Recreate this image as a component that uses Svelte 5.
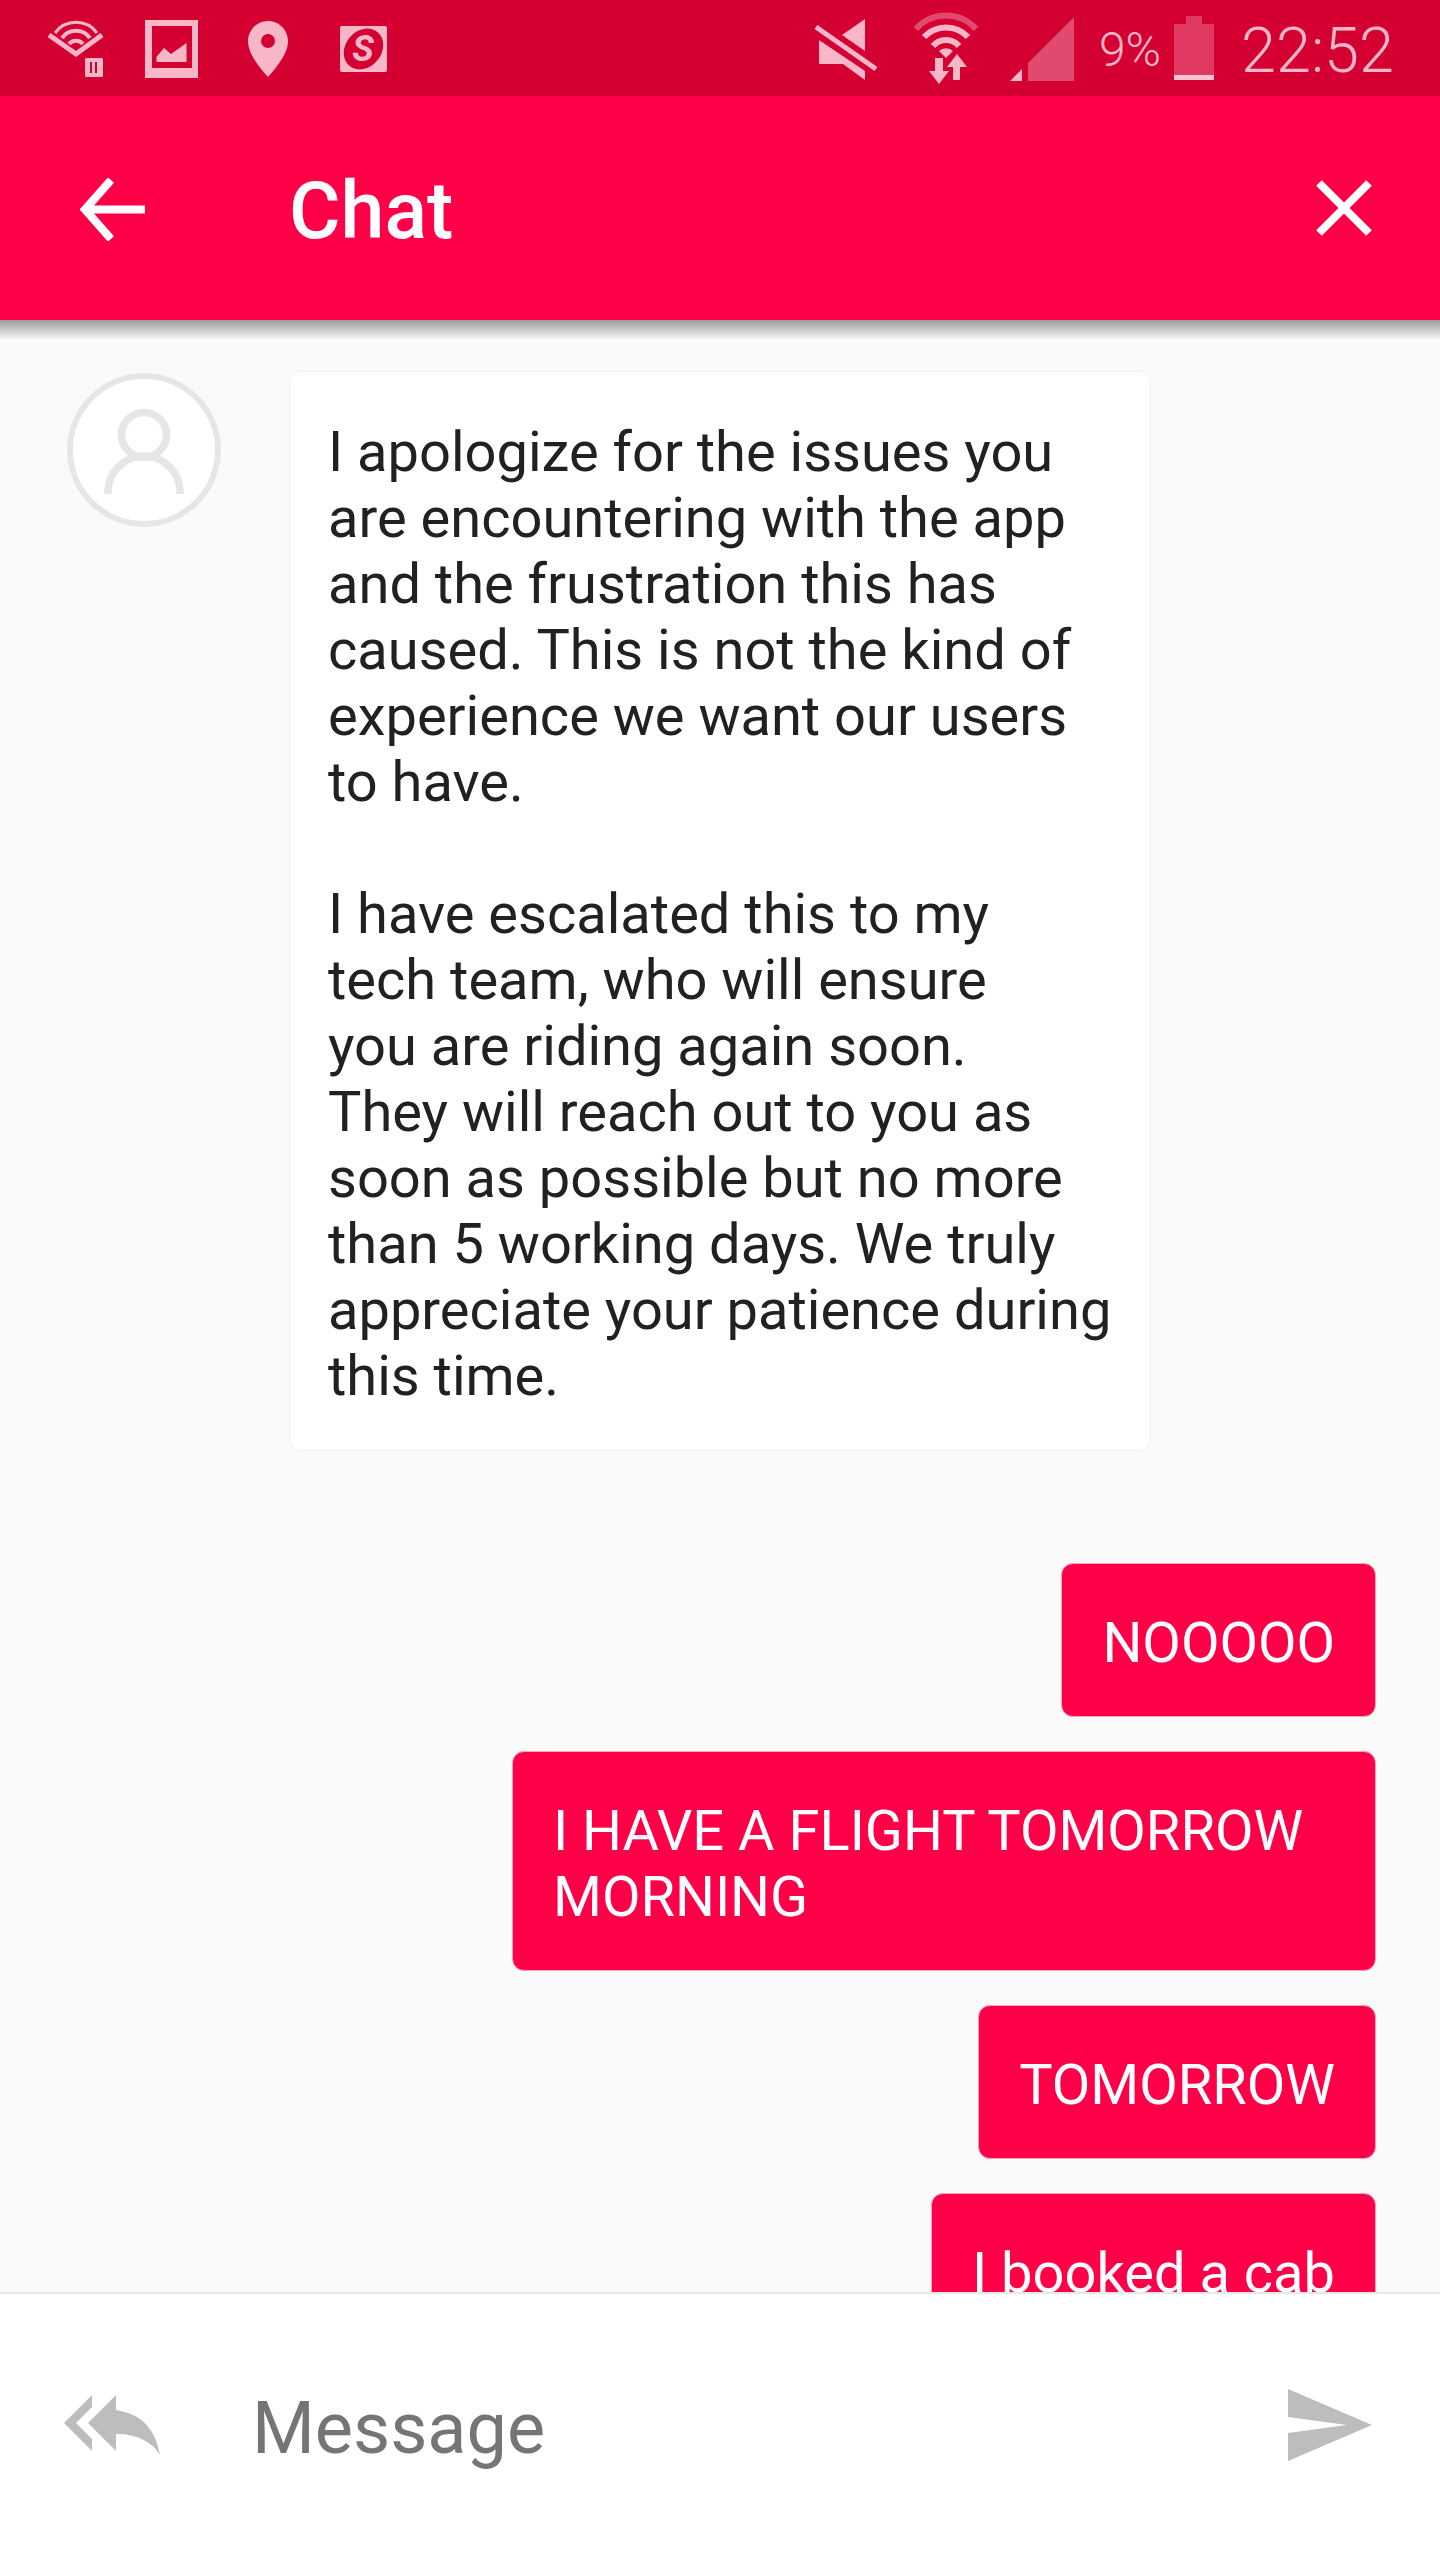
<script>
  const sent = ['NOOOOO', 'I HAVE A FLIGHT TOMORROW MORNING', 'TOMORROW', 'I booked a cab'];
  const reply = [
    'I apologize for the issues you', 'are encountering with the app', 'and the frustration this has',
    'caused. This is not the kind of', 'experience we want our users', 'to have.', '',
    'I have escalated this to my', 'tech team, who will ensure', 'you are riding again soon.',
    'They will reach out to you as', 'soon as possible but no more', 'than 5 working days. We truly',
    'appreciate your patience during', 'this time.'
  ];
</script>

<div class="screen">
  <div class="status">
    <svg class="i" style="width:57px" viewBox="47 0 57 96">
      <g fill="none" stroke="#f7b7c8">
        <path d="M49 35 L76 54 L102 35" stroke-width="5" />
        <path d="M55 33 A26 26 0 0 1 97 33" stroke-width="3" />
        <path d="M62 38 A17 17 0 0 1 90 38" stroke-width="4" />
        <path d="M69 44 A9 9 0 0 1 83 44" stroke-width="4" />
      </g>
      <path fill-rule="evenodd" fill="#f7b7c8" d="M86 58 H102 Q103 58 103 60 V75 Q103 77 102 77 H86 Q85 77 85 75 V60 Q85 58 86 58 Z M90 62 V73 H92 V62 Z M95 62 V73 H97 V62 Z" />
    </svg>
    <svg class="i ml41" style="width:53px" viewBox="145 0 53 96">
      <path fill="#f7b7c8" fill-rule="evenodd" d="M145 20 H198 V78 H145 Z M152 26 V68 H192 V26 Z" />
      <path fill="#f7b7c8" d="M156.500 57 L164 48 L171 54 L186.500 43 V62 H156.500 Z" />
    </svg>
    <svg class="i ml50" style="width:40px" viewBox="248 0 40 96">
      <path fill="#f7b7c8" fill-rule="evenodd" d="M268 21 C256 21 248 31 248 41 C248 54 260 68 268 77 C276 68 288 54 288 41 C288 31 280 21 268 21 Z M268 34 A7 7 0 1 1 268 48 A7 7 0 1 1 268 34 Z" />
    </svg>
    <svg class="i ml52" style="width:47px" viewBox="340 0 47 96">
      <rect x="340" y="26" width="47" height="46" rx="2" fill="#f7b7c8" />
      <ellipse cx="363.500" cy="49" rx="22" ry="18" fill="#d50032" transform="rotate(-50 363.500 49)" />
      <text x="363" y="61" text-anchor="middle" class="slogo">S</text>
    </svg>

    <svg class="i auto" style="width:66px" viewBox="816 0 66 96">
      <path fill="#f7b7c8" d="M868 19 L845 35 L868 51 Z M822 40 L868 71 V80 L846 64 H822 Z" />
      <path stroke="#f7b7c8" stroke-width="5" d="M819 27 L879 69" />
    </svg>
    <svg class="i ml34" style="width:66px" viewBox="916 0 66 96">
      <path fill="none" stroke="#e04a6e" stroke-width="6" d="M919 29 A40 40 0 0 1 979 29" />
      <path fill="none" stroke="#f7b7c8" stroke-width="6" d="M927 37 A30 30 0 0 1 971 37" />
      <path fill="none" stroke="#f7b7c8" stroke-width="6" d="M936 46 A17 17 0 0 1 962 46" />
      <path fill="#f7b7c8" d="M949 58 L942 51 A10 10 0 0 1 956 51 Z" />
      <path fill="#f7b7c8" d="M938 58 H946 V71 H952 L942 84 L932 71 H938 Z M956 80 H963 V67 H970 L960 54 L950 67 H956 Z" />
    </svg>
    <svg class="i ml31" style="width:64px" viewBox="1013 0 64 96">
      <path fill="#f7b7c8" d="M1013 81 L1025 69 V81 Z" />
      <path fill="#e04a6e" d="M1031 63 L1077 17 V81 H1031 Z" />
    </svg>
    <span class="pct">9%</span>
    <svg class="i ml13" style="width:40px" viewBox="1175 0 40 96">
      <path fill="#e03a63" d="M1187 16 H1203 V24 H1215 V75 H1175 V24 H1187 Z" />
      <rect x="1175" y="75" width="40" height="5" fill="#fbc4d2" />
    </svg>
    <span class="time">22:52</span>
  </div>

  <header class="bar">
    <svg class="back" viewBox="0 0 65 63">
      <path fill="none" stroke="#fff" stroke-width="8" d="M31 2 L5 31.500 L31 61 M5 31.500 H65" />
    </svg>
    <h1>Chat</h1>
    <svg class="close" viewBox="0 0 56 56">
      <path fill="none" stroke="#fff" stroke-width="8" d="M3 3 L53 53 M53 3 L3 53" />
    </svg>
  </header>

  <main class="chat">
    <div class="incoming">
      <div class="avatar">
        <svg viewBox="0 0 142 142">
          <g fill="none" stroke="#e6e6e6" stroke-width="7.500">
            <circle cx="71" cy="56" r="22.500" />
            <path d="M35 115 V113 A36 36 0 0 1 107 113 V115" />
          </g>
        </svg>
      </div>
      <div class="bubble recv">
        {#each reply as line}
          <div class="line">{line || '\u00a0'}</div>
        {/each}
      </div>
    </div>
    <div class="out">
      {#each sent as m}
        <div class="bubble mine">{m}</div>
      {/each}
    </div>
  </main>

  <footer class="compose">
    <svg class="reply" viewBox="64 2398 96 60">
      <path fill="#bdbdbd" d="M92 2398 L64 2426 L92 2454 V2442 L76 2426 L92 2410 Z" />
      <path fill="#bdbdbd" d="M116 2398 L88 2426 L116 2454 V2437 C138 2437 152 2445 160 2458 C156 2435 144 2417 116 2413 Z" />
    </svg>
    <span class="ph">Message</span>
    <svg class="send" viewBox="1288 2390 84 72">
      <path fill="#bdbdbd" d="M1288 2390 L1372 2426 L1288 2462 V2434 L1347 2426 L1288 2418 Z" />
    </svg>
  </footer>
</div>

<style>
  :global(body) { margin: 0; }
  .screen {
    width: 1440px; height: 2560px; display: flex; flex-direction: column;
    overflow: hidden; background: #fafafa; font-family: Roboto, sans-serif; color: #212121;
  }
  .status {
    height: 96px; flex: none; display: flex; align-items: flex-start;
    background: #d50032; padding: 0 46px 0 47px; box-sizing: border-box; color: #f7b7c8;
  }
  .i { height: 96px; flex: none; display: block; }
  .ml41 { margin-left: 41px; } .ml50 { margin-left: 50px; } .ml52 { margin-left: 52px; }
  .ml34 { margin-left: 34px; } .ml31 { margin-left: 31px; } .ml13 { margin-left: 13px; }
  .auto { margin-left: auto; }
  .slogo { font: italic 700 36px Roboto, sans-serif; fill: #f7b7c8; }
  .pct { font-size: 48px; font-weight: 300; line-height: 96px; margin-left: 25px; margin-top: 2px; }
  .time { font-size: 63px; font-weight: 300; line-height: 96px; margin-left: 27px; margin-top: 3px; }
  .bar {
    height: 224px; flex: none; background: #ff0048; display: flex; align-items: center;
    position: relative; z-index: 1; padding: 0 68px 0 80px; box-sizing: border-box; color: #fff;
  }
  .bar::after {
    content: ''; position: absolute; left: 0; right: 0; top: 100%; height: 20px;
    background: linear-gradient(rgba(0, 0, 0, .38), rgba(0, 0, 0, 0));
  }
  .back { width: 65px; height: 63px; margin-top: 2px; flex: none; }
  .bar h1 { margin: 6px 0 0 144px; font-size: 79px; font-weight: 500; flex: 1; line-height: 1; }
  .close { width: 56px; height: 56px; margin-top: -1px; flex: none; }
  .chat { flex: 1; min-height: 0; overflow: hidden; padding: 51px 64px 0 67px; box-sizing: border-box; }
  .incoming { display: flex; align-items: flex-start; }
  .avatar {
    width: 154px; height: 154px; box-sizing: border-box; border: 6px solid #e6e6e6; border-radius: 50%;
    background: #fff; margin: 2px 68px 0 0; flex: none;
  }
  .avatar svg { display: block; width: 142px; height: 142px; }
  .bubble { box-sizing: border-box; font-size: 56px; line-height: 66px; border-radius: 12px; }
  .line { white-space: nowrap; }
  .recv { width: 862px; background: #fff; border: 1px solid #f0f0f0; padding: 47px 38px 41px; }
  .out { display: flex; flex-direction: column; align-items: flex-end; gap: 34px; margin-top: 112px; }
  .mine { max-width: 864px; background: #ff0048; color: #fff; border: 1px solid #f5a5bd; padding: 46px 40px 40px; }
  .compose {
    height: 268px; flex: none; background: #fff; border-top: 2px solid #e8e8e8; box-sizing: border-box;
    display: flex; align-items: center; position: relative; padding: 0 68px 0 64px;
  }
  .reply { width: 96px; height: 60px; flex: none; margin-top: -4px; }
  .ph { font-size: 72px; color: #757575; margin: 3px 0 0 92px; flex: 1; }
  .send { width: 84px; height: 72px; flex: none; margin-top: -4px; }
</style>
